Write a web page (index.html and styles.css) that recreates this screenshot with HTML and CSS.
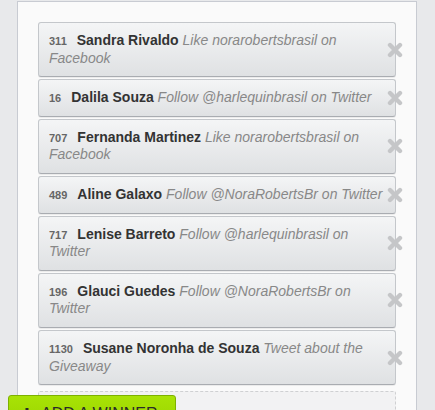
FILE: index.html
```html
<!DOCTYPE html>
<html>
<head>
<meta charset="utf-8">
<link rel="stylesheet" href="styles.css">
</head>
<body>
<div class="panel">
  <ul class="entries">
    <li class="entry"><span class="num">311</span><b class="name">Sandra Rivaldo</b> <i class="action">Like norarobertsbrasil on Facebook</i><span class="remove"><svg viewBox="0 0 16 16" width="16" height="16"><path d="M3 3 L13 13 M13 3 L3 13"/></svg></span></li>
    <li class="entry"><span class="num">16</span><b class="name">Dalila Souza</b> <i class="action">Follow @harlequinbrasil on Twitter</i><span class="remove"><svg viewBox="0 0 16 16" width="16" height="16"><path d="M3 3 L13 13 M13 3 L3 13"/></svg></span></li>
    <li class="entry"><span class="num">707</span><b class="name">Fernanda Martinez</b> <i class="action">Like norarobertsbrasil on Facebook</i><span class="remove"><svg viewBox="0 0 16 16" width="16" height="16"><path d="M3 3 L13 13 M13 3 L3 13"/></svg></span></li>
    <li class="entry"><span class="num">489</span><b class="name">Aline Galaxo</b> <i class="action">Follow @NoraRobertsBr on Twitter</i><span class="remove"><svg viewBox="0 0 16 16" width="16" height="16"><path d="M3 3 L13 13 M13 3 L3 13"/></svg></span></li>
    <li class="entry"><span class="num">717</span><b class="name">Lenise Barreto</b> <i class="action">Follow @harlequinbrasil on Twitter</i><span class="remove"><svg viewBox="0 0 16 16" width="16" height="16"><path d="M3 3 L13 13 M13 3 L3 13"/></svg></span></li>
    <li class="entry"><span class="num">196</span><b class="name">Glauci Guedes</b> <i class="action">Follow @NoraRobertsBr on Twitter</i><span class="remove"><svg viewBox="0 0 16 16" width="16" height="16"><path d="M3 3 L13 13 M13 3 L3 13"/></svg></span></li>
    <li class="entry"><span class="num">1130</span><b class="name">Susane Noronha de Souza</b> <i class="action">Tweet about the Giveaway</i><span class="remove"><svg viewBox="0 0 16 16" width="16" height="16"><path d="M3 3 L13 13 M13 3 L3 13"/></svg></span></li>
  </ul>
  <div class="dropzone"></div>
</div>
<button class="add-winner"><svg class="plus" viewBox="0 0 12 12" width="12" height="12"><path d="M6 0 V12 M0 6 H12"/></svg>ADD A WINNER</button>
</body>
</html>
```
FILE: styles.css
```css
html, body {
  margin: 0;
  padding: 0;
}
body {
  background: #e8e9eb;
  font-family: "Liberation Sans", Arial, sans-serif;
  height: 410px;
  overflow: hidden;
  padding-top: 1px;
  box-sizing: border-box;
}
.panel {
  margin-left: 17px;
  width: 358px;
  border: 1px solid #c8cbd2;
  background: #fafafa;
  padding: 20px 20px 40px;
  box-sizing: content-box;
}
.entries {
  list-style: none;
  margin: 0;
  padding: 0;
}
.entry {
  position: relative;
  width: 358px;
  box-sizing: border-box;
  margin-bottom: 2px;
  padding: 9px 6px 9px 10px;
  border: 1px solid #c4c7cb;
  border-bottom-color: #a9acb1;
  border-radius: 3px;
  background: linear-gradient(#f4f5f6, #dfe1e3);
  box-shadow: 0 1px 0 rgba(0,0,0,0.06);
  font-size: 14px;
  line-height: 17.6px;
  color: #333;
}
.num {
  font-size: 11px;
  line-height: 10px;
  font-weight: bold;
  color: #666;
  margin-right: 10px;
}
.name {
  font-weight: bold;
  color: #333;
}
.action {
  font-style: italic;
  color: #888;
}
.remove {
  position: absolute;
  right: -8px;
  top: 50%;
  margin-top: -8px;
  width: 16px;
  height: 16px;
}
.remove svg {
  display: block;
}
.remove path {
  stroke: #c5c6c8;
  stroke-width: 4.4;
  stroke-linecap: round;
  fill: none;
}
.dropzone {
  margin-top: 6px;
  width: 358px;
  height: 60px;
  box-sizing: border-box;
  border: 1px dashed #cfd0d2;
  border-radius: 2px;
  background: #f2f2f3;
}
.add-winner {
  position: absolute;
  left: 8px;
  top: 395px;
  width: 168px;
  height: 40px;
  box-sizing: border-box;
  padding: 8px 10px 0 12px;
  text-align: left;
  border: 1px solid #7eb100;
  border-radius: 3px;
  background: linear-gradient(#a8e305, #97d000);
  font-family: "Liberation Sans", Arial, sans-serif;
  font-size: 16px;
  line-height: 20px;
  color: #2a2a2a;
  display: flex;
  align-items: flex-start;
  gap: 8px;
}
.plus {
  margin-top: 4px;
}
.plus path {
  stroke: #2a2a2a;
  stroke-width: 3;
  fill: none;
}
```
